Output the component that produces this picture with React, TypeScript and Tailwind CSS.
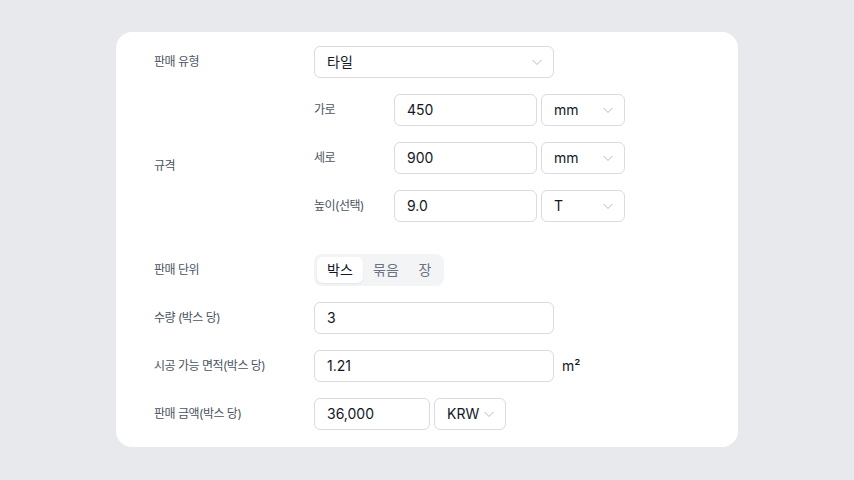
import React, { useState } from "react";

const font = { fontFamily: 'Inter, "Noto Sans CJK KR", sans-serif' };

const Chevron: React.FC = () => (
  <svg className="h-3 w-3 text-[#b8bcc4]" viewBox="0 0 12 12" fill="none" stroke="currentColor" strokeWidth={1}>
    <path d="M1.5 4l4.5 4.5L10.5 4" />
  </svg>
);

const Select: React.FC<{ value: string; className?: string }> = ({ value, className = "" }) => (
  <div
    className={`flex h-8 items-center justify-between rounded-md border border-[#d9dbe0] bg-white pl-3 pr-[10px] text-sm text-[#111827] ${className}`}
  >
    <span>{value}</span>
    <Chevron />
  </div>
);

const Input: React.FC<{ value: string; className?: string }> = ({ value, className = "" }) => (
  <div className={`flex h-8 items-center rounded-md border border-[#d9dbe0] bg-white px-3 text-sm text-[#111827] ${className}`}>
    {value}
  </div>
);

const Label: React.FC<{ children: React.ReactNode }> = ({ children }) => (
  <div className="w-40 shrink-0 text-xs tracking-[-0.5px] text-[#4b5563]">{children}</div>
);

const Row: React.FC<{ label: string; children: React.ReactNode }> = ({ label, children }) => (
  <div className="flex h-8 items-center">
    <Label>{label}</Label>
    <div className="flex items-center gap-1">{children}</div>
  </div>
);

const specs = [
  { name: "가로", value: "450", unit: "mm" },
  { name: "세로", value: "900", unit: "mm" },
  { name: "높이(선택)", value: "9.0", unit: "T" },
];

const units = [
  { name: "박스", width: "w-[46px]" },
  { name: "묶음", width: "w-[46px]" },
  { name: "장", width: "w-8" },
];

export default function App() {
  const [unit, setUnit] = useState("박스");

  return (
    <div className="flex min-h-[480px] w-full justify-center bg-[#e8e9ec] pt-8" style={font}>
      <div className="h-[415px] w-[622px] rounded-2xl bg-white pl-[38px] pt-[14px]">
        <div className="flex flex-col gap-4">
          <Row label="판매 유형">
            <Select value="타일" className="w-[240px]" />
          </Row>

          {/* 규격: 가로 / 세로 / 높이 */}
          <div className="flex items-center">
            <Label>규격</Label>
            <div className="flex flex-col gap-4 pb-4">
              {specs.map((s) => (
                <div key={s.name} className="flex h-8 items-center">
                  <div className="w-20 text-xs tracking-[-0.5px] text-[#4b5563]">{s.name}</div>
                  <Input value={s.value} className="w-[143px]" />
                  <Select value={s.unit} className="ml-1 w-[84px]" />
                </div>
              ))}
            </div>
          </div>

          <Row label="판매 단위">
            <div className="flex rounded-lg bg-[#f3f4f6] p-[3px]">
              {units.map((u) => (
                <button
                  key={u.name}
                  onClick={() => setUnit(u.name)}
                  className={`h-[26px] rounded-md text-sm ${u.width} ${
                    unit === u.name ? "bg-white text-[#111827] shadow-[0_1px_2px_rgba(0,0,0,0.06)]" : "text-[#6b7280]"
                  }`}
                >
                  {u.name}
                </button>
              ))}
            </div>
          </Row>

          <Row label="수량 (박스 당)">
            <Input value="3" className="w-[240px]" />
          </Row>

          <Row label="시공 가능 면적(박스 당)">
            <Input value="1.21" className="w-[240px]" />
            <span className="ml-1 text-sm text-[#111827]">m²</span>
          </Row>

          <Row label="판매 금액(박스 당)">
            <Input value="36,000" className="w-[116px]" />
            <Select value="KRW" className="w-[72px]" />
          </Row>
        </div>
      </div>
    </div>
  );
}
